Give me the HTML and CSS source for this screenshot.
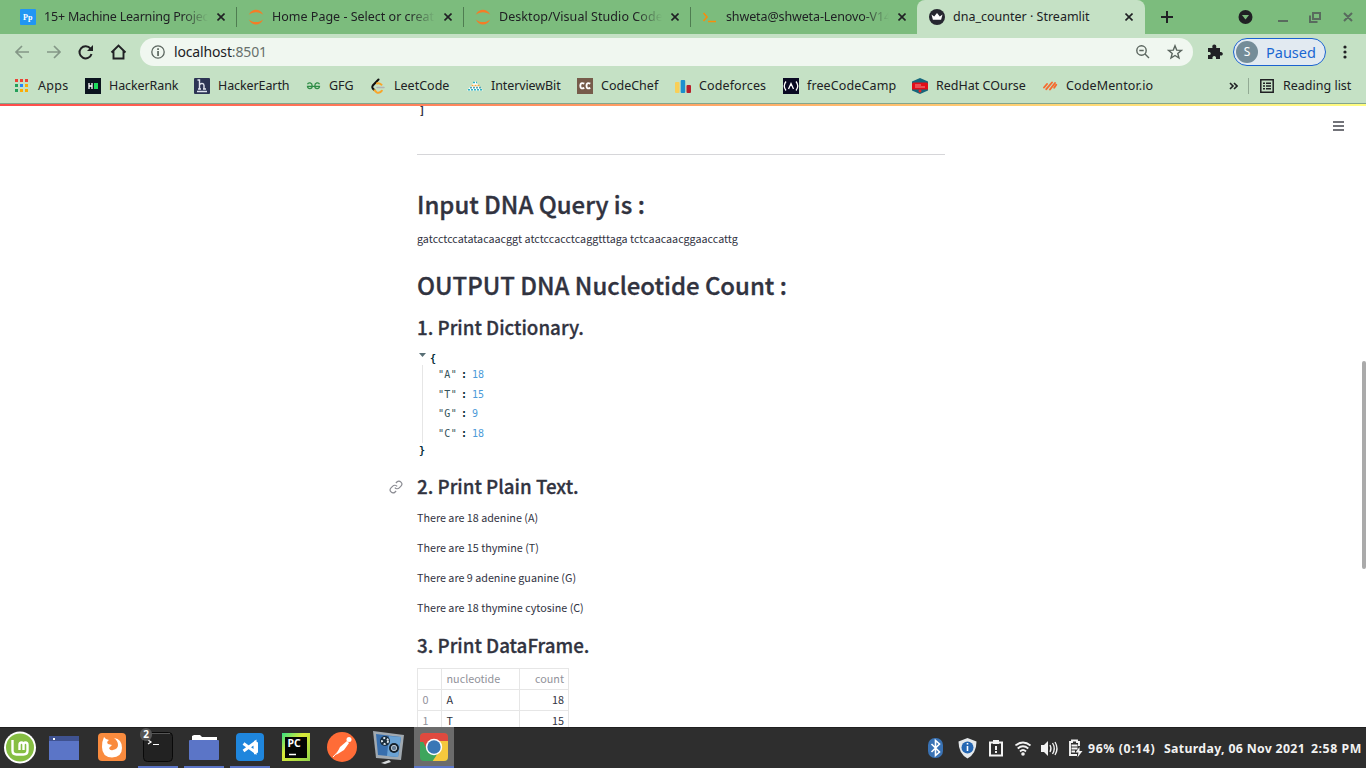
FILE: index.html
```html
<!DOCTYPE html>
<html lang="en">
<head>
<meta charset="utf-8">
<title>dna_counter · Streamlit</title>
<link rel="stylesheet" href="styles.css">
</head>
<body>
<div class="screen">
  <header class="browser">
    <div class="tabs">
      <div class="tab">
        <svg class="fav" viewBox="0 0 16 16"><rect width="16" height="16" rx="1" fill="#2196f3"/><text x="3" y="11" class="pp">Pp</text></svg>
        <span class="title t1">15+ Machine Learning Projec</span>
        <svg class="close" viewBox="0 0 8 8"><path d="M.5.5l7 7M7.5.5l-7 7"/></svg>
      </div>
      <div class="tab">
        <svg class="fav" viewBox="0 0 16 16"><path d="M.8 5.7C4-.9 12-.9 15.2 5.7 11.500 2.300 4.500 2.300.8 5.700ZM.8 10.500C4 17.100 12 17.100 15.200 10.500 11.500 13.900 4.500 13.900.8 10.500Z" fill="#f57c26"/></svg>
        <span class="title t2">Home Page - Select or creat</span>
        <svg class="close" viewBox="0 0 8 8"><path d="M.5.5l7 7M7.5.5l-7 7"/></svg>
      </div>
      <div class="tab">
        <svg class="fav" viewBox="0 0 16 16"><path d="M.8 5.7C4-.9 12-.9 15.2 5.7 11.500 2.300 4.500 2.300.8 5.700ZM.8 10.500C4 17.100 12 17.100 15.200 10.500 11.500 13.900 4.500 13.900.8 10.500Z" fill="#f57c26"/></svg>
        <span class="title t3">Desktop/Visual Studio Code</span>
        <svg class="close" viewBox="0 0 8 8"><path d="M.5.5l7 7M7.5.5l-7 7"/></svg>
      </div>
      <div class="tab last">
        <svg class="fav" viewBox="0 0 16 16"><path d="M1.500 4l3.500 4-3.500 4M6 12.500h8" fill="none" stroke="#f88d0b" stroke-width="1.600"/></svg>
        <span class="title t4">shweta@shweta-Lenovo-V14</span>
        <svg class="close" viewBox="0 0 8 8"><path d="M.5.5l7 7M7.5.5l-7 7"/></svg>
      </div>
      <div class="tab active">
        <svg class="fav" viewBox="0 0 16 16"><circle cx="8" cy="8" r="8" fill="#262730"/><path d="M2.500 5.500l2.700 2L8 4l2.800 3.500 2.700-2-1.400 5.200H3.900Z" fill="#fff"/></svg>
        <span class="title t5">dna_counter · Streamlit</span>
        <svg class="close" viewBox="0 0 8 8"><path d="M.5.5l7 7M7.5.5l-7 7"/></svg>
      </div>
      <svg class="newtab" viewBox="0 0 12 12"><path d="M6 0v12M0 6h12"/></svg>
      <svg class="winbuttons" viewBox="0 0 116 16"><circle cx="7.500" cy="8" r="7" fill="#202124"/><path d="M4 6h7L7.500 10.500Z" fill="#7cbc7d"/><g fill="none" stroke="#596b5e" stroke-width="2"><path d="M40 12h10M75 4h7v6h-7ZM72 6.500v6.500h7.500M106 4l8 8M114 4l-8 8"/></g></svg>
    </div>

    <div class="toolbar">
      <svg class="nav" viewBox="0 0 128 20"><g fill="none" stroke-width="1.700"><path d="M15 10H2M8 4l-6 6 6 6M33 10h13M40 4l6 6-6 6" stroke="#849787"/><path d="M76.500 6.600a6.100 6.100 0 1 0 1 5.300" stroke="#202124" stroke-width="2"/><path d="M97.500 10.500l7-7 7 7M99.500 8.500V16.500h10V8.500" stroke="#202124" stroke-width="1.900"/></g><path d="M79 3v6h-6Z" fill="#202124"/></svg>
      <div class="address">
        <svg class="info" viewBox="0 0 14 14"><circle cx="7" cy="7" r="6.200" fill="none" stroke="#5a655e" stroke-width="1.300"/><path d="M6.200 3.200h1.700v1.700H6.200zM6.200 6h1.700v5H6.200z" fill="#5a655e"/></svg>
        <span class="url">localhost<span class="port">:8501</span></span>
        <svg class="magnify" viewBox="0 0 14 14"><g fill="none" stroke="#5a655e" stroke-width="1.400"><circle cx="5.500" cy="5.500" r="4.700"/><path d="M9 9l4 4M3.300 5.500h4.400"/></g></svg>
        <svg class="star" viewBox="0 0 16 16"><path d="M8 1.800l1.700 4.300 4.700.3-3.600 3 1.200 4.600L8 11.500 4 14l1.200-4.600-3.600-3 4.700-.3Z" fill="none" stroke="#5a655e" stroke-width="1.400"/></svg>
      </div>
      <svg class="puzzle" viewBox="0 0 16 16"><path d="M1 4h4.500C4.800 1.500 6 .5 7.300.5S9.800 1.500 9.200 4H13v4c2.200-.5 2.800.8 2.800 1.800s-.6 2.200-2.800 1.700V15H9c.3-2.200-.6-3-1.800-3s-2 .8-1.700 3H1v-4c2 .3 2.700-.6 2.700-1.600S3 7.600 1 8Z" fill="#202124"/></svg>
      <div class="profile"><span class="avatar">S</span><span class="paused">Paused</span></div>
      <svg class="dots" viewBox="0 0 4 16"><g fill="#202124"><circle cx="2" cy="3" r="1.600"/><circle cx="2" cy="8" r="1.600"/><circle cx="2" cy="13" r="1.600"/></g></svg>
    </div>

    <div class="bookmarks">
      <div class="bm"><svg viewBox="0 0 16 16"><g fill="#ea4335"><path d="M0 1h3v3H0zM5 1h3v3H5zM10 1h3v3h-3z"/></g><g fill="#24a05a"><path d="M0 6h3v3H0zM0 11h3v3H0z"/></g><path d="M5 6h3v3H5z" fill="#2684fc"/><path d="M10 6h3v3h-3zM5 11h3v3H5zM10 11h3v3h-3z" fill="#fbac05"/></svg><span class="b0">Apps</span></div>
      <div class="bm"><svg viewBox="0 0 16 16"><path d="M0 0h16v16H0z" fill="#0b141f"/><path d="M4 5v6M7 5v6M4 8h3" stroke="#fff" stroke-width="1.300"/><path d="M9 5h4v6H9z" fill="#1fdc5e"/></svg><span class="b1">HackerRank</span></div>
      <div class="bm"><svg viewBox="0 0 16 16"><rect width="16" height="16" rx="1" fill="#2c3454"/><path d="M3.500 2h2v9M5.500 7c1-2 4.500-2 4.500.5V11M4 11h3M9 11h3M3 13.500h10" fill="none" stroke="#dfe3ee" stroke-width="1.400"/></svg><span class="b2">HackerEarth</span></div>
      <div class="bm tight"><svg viewBox="0 0 16 16"><path d="M1.500 6.200C2.500 4 6.200 4.500 6.200 8S1.500 11.300 1.500 8.300h12c0 3-4.700 3.200-4.700-.3S12.500 4 13.500 6.200" fill="none" stroke="#2f8d46" stroke-width="1.300"/></svg><span class="b3">GFG</span></div>
      <div class="bm tight"><svg viewBox="0 0 16 16"><g fill="none" stroke-width="2" stroke-linecap="round"><path d="M7.500 1.500L1.800 7.500q-1 1.500 0 3l1.500 1.500" stroke="#111"/><path d="M3.500 12.200l2 2q1.800 1.300 3.800 0l1.500-1.500M6 5.500q2-1 4.500 1.200" stroke="#f8a52a"/><path d="M6 9.500h7" stroke="#b3b3b3" stroke-width="1.500"/></g></svg><span class="b4">LeetCode</span></div>
      <div class="bm"><svg viewBox="0 0 16 16"><path d="M8 3l8 9.500H0Z" fill="#fff"/><g stroke-width="1.600" stroke-dasharray="2 1" fill="none"><path d="M6 4.500h4M1 11.800h14" stroke="#2bb3c6"/><path d="M4.500 7.500h8" stroke="#f0a53a"/><path d="M3 9.600h11" stroke="#54a6b3"/></g></svg><span class="b5">InterviewBit</span></div>
      <div class="bm"><svg viewBox="0 0 16 16"><path d="M0 0h16v16H0z" fill="#765b4a"/><path d="M7.300 5.700Q3.300 4 3.300 7.800t4 2.100M13.300 5.700Q9.500 4 9.500 7.800t3.800 2.100" fill="none" stroke="#fff" stroke-width="1.900"/></svg><span class="b6">CodeChef</span></div>
      <div class="bm"><svg viewBox="0 0 16 16"><rect y="4" width="4.500" height="11" rx="1" fill="#f9cf57"/><rect x="5.700" y="2" width="4.500" height="13" rx="1" fill="#1b8fce"/><rect x="11.500" y="7" width="4.500" height="8" rx="1" fill="#b71f2b"/></svg><span class="b7">Codeforces</span></div>
      <div class="bm"><svg viewBox="0 0 16 16"><path d="M0 0h16v16H0z" fill="#0a0a23"/><path d="M3 3.500q-3.500 4.500 0 9M13 3.500q3.500 4.500 0 9M5.500 11L8 5.500l2.500 5.500" fill="none" stroke="#fff" stroke-width="1.300"/></svg><span class="b8">freeCodeCamp</span></div>
      <div class="bm"><svg viewBox="0 0 16 16"><path d="M8 0l8 3.500v9L8 16 0 12.500v-9Z" fill="#15667c"/><path d="M0 5.500l1-1h14l1 1v6H0Z" fill="#e20d18"/><path d="M3 7h6M3 9h10" stroke="#f48e8e"/><circle cx="8" cy="13" r="1.500" fill="#e22"/></svg><span class="b9">RedHat COurse</span></div>
      <div class="bm tight"><svg viewBox="0 0 16 16"><path d="M1 9.500L4 6M3.300 11.200L9 4.500M7 11.500l5-6.500M11.200 9.800l2-3" fill="none" stroke="#f56a2e" stroke-width="1.900" stroke-linecap="round"/></svg><span class="b10">CodeMentor.io</span></div>
      <svg class="more" viewBox="0 0 9 8"><path d="M1 1l3 3-3 3M5 1l3 3-3 3" fill="none" stroke="#202124" stroke-width="1.600"/></svg>
      <div class="reading"><svg viewBox="0 0 14 14"><path d="M.8.8h12.400v12.400H.8Z" fill="none" stroke="#202124" stroke-width="1.500"/><path d="M3 4.200h2M6 4.200h5M3 7h2M6 7h5M3 9.800h2M6 9.800h5" stroke="#202124" stroke-width="1.500"/></svg><span class="b11">Reading list</span></div>
    </div>
    <div class="decoration"></div>
  </header>

  <main class="page">
    <svg class="menu" viewBox="0 0 12 10"><path d="M0 1h11M0 5h11M0 9h11" stroke="#44454d" stroke-width="1.300"/></svg>
    <div class="scrollthumb"></div>
    <div class="content">
      <div class="bracket">]</div>
      <hr>
      <h1 class="h-input">Input DNA Query is :</h1>
      <p class="query">gatcctccatatacaacggt atctccacctcaggtttaga tctcaacaacggaaccattg</p>
      <h1 class="h-output">OUTPUT DNA Nucleotide Count :</h1>
      <h2 class="h-dict">1. Print Dictionary.</h2>
      <div class="json">
        <div class="open"><svg viewBox="0 0 7 4"><path d="M0 0h7L3.500 4Z" fill="#586e75"/></svg>{</div>
        <div class="entries">
          <div><span>"A"</span><b>:</b><i>18</i></div>
          <div><span>"T"</span><b>:</b><i>15</i></div>
          <div><span>"G"</span><b>:</b><i>9</i></div>
          <div><span>"C"</span><b>:</b><i>18</i></div>
        </div>
        <div class="shut">}</div>
      </div>
      <h2 class="h-plain"><svg class="anchor" viewBox="0 0 24 24"><path d="M10 13a5 5 0 0 0 7.540.54l3-3a5 5 0 0 0-7.070-7.070l-1.720 1.710M14 11a5 5 0 0 0-7.540-.54l-3 3a5 5 0 0 0 7.070 7.070l1.710-1.710"/></svg>2. Print Plain Text.</h2>
      <div class="lines">
        <p>There are 18 adenine (A)</p>
        <p>There are 15 thymine (T)</p>
        <p>There are 9 adenine guanine (G)</p>
        <p>There are 18 thymine cytosine (C)</p>
      </div>
      <h2 class="h-frame">3. Print DataFrame.</h2>
      <div class="frame">
        <span></span><span class="muted">nucleotide</span><span class="muted num">count</span>
        <span class="muted">0</span><span>A</span><span class="num">18</span>
        <span class="muted">1</span><span>T</span><span class="num">15</span>
      </div>
    </div>
  </main>

  <footer class="taskbar">
    <div class="app"><svg viewBox="0 0 40 41"><circle cx="20" cy="20.500" r="16" fill="#fff"/><circle cx="20" cy="20.500" r="14" fill="#86be43"/><path d="M12.500 13v10.500q0 4 4 4h7q4 0 4-4V18q0-2.500-2-2.500t-2 2.500v5M23.500 18q0-2.500-2-2.500t-2 2.500v5" fill="none" stroke="#fff" stroke-width="2.400"/></svg></div>
    <div class="app window"><svg viewBox="0 0 40 41"><path d="M5 9h30v24H5z" fill="#5b75c7"/><path d="M5 9h30v5H5z" fill="#3f5290"/><path d="M9 11h2v2H9z" fill="#fff"/></svg></div>
    <div class="app firefox"><svg viewBox="0 0 40 41"><rect x="6" y="6" width="28" height="28" rx="4" fill="#f98b3e"/><path d="M12 10q2 3 5 3-3 2-1 4l4 1-3 3q1 3 4 2 5-1 5-5 0-4-4-7 8 1 8 10 0 9-10 9.500Q10 30 10 20q0-6 2-10Z" fill="#fff"/></svg></div>
    <div class="app open"><svg viewBox="0 0 40 41"><rect x="5.500" y="5.500" width="29" height="29" rx="4" fill="#222" stroke="#090909"/><path d="M8 6.500h24" stroke="#555"/><path d="M10 13l3 2-3 2M15 17.500h6" fill="none" stroke="#fff" stroke-width="1.200"/></svg><span class="badge">2</span></div>
    <div class="app open"><svg viewBox="0 0 40 41"><path d="M8 13V9l2-1h6l2 2h15v6H8Z" fill="#fff"/><rect x="5" y="13" width="30" height="20" rx="1" fill="#5b75c7"/></svg></div>
    <div class="app open"><svg viewBox="0 0 40 41"><rect x="6" y="6" width="28" height="28" rx="4" fill="#1f86dd"/><path d="M13.500 16.500l11.500 8.500V15.500L13.500 24" fill="none" stroke="#fff" stroke-width="3"/><path d="M24 13.500l4 2v10l-4 2Z" fill="#fff"/></svg></div>
    <div class="app"><svg viewBox="0 0 40 41"><defs><linearGradient id="pc" x2="1" y2="1"><stop stop-color="#35df83"/><stop offset=".4" stop-color="#dcea38"/><stop offset="1" stop-color="#90d34a"/></linearGradient></defs><path d="M6 6h28v28H6z" fill="url(#pc)"/><path d="M9 10h22v21H9z" fill="#050505"/><text x="11.500" y="20" class="pc">PC</text><path d="M13 27.500h7" stroke="#fff" stroke-width="1.500"/></svg></div>
    <div class="app"><svg viewBox="0 0 40 41"><circle cx="20" cy="20" r="15" fill="#ff6c37"/><path d="M14 28l4-8 7-6 2 2-5 7Z" fill="#fff"/><path d="M11 30l14-15" stroke="#fff"/><circle cx="27" cy="12.500" r="2.500" fill="#fff"/></svg></div>
    <div class="app"><svg viewBox="0 0 40 41"><path d="M5 4l31 4-3 25-25-2Z" fill="#a1a9b0"/><path d="M8 7l25 3-3 20-20-2Z" fill="#376ead"/><path d="M21 9l12 1-3 20-11-1Z" fill="#6aa2d4"/><circle cx="17" cy="14" r="5" fill="#192c3c"/><circle cx="17" cy="14" r="3" fill="none" stroke="#dce6ed" stroke-dasharray="2 2" stroke-width="2"/><circle cx="26" cy="21" r="5" fill="#15202b"/><circle cx="26" cy="21" r="2.700" fill="#657d96" stroke="#bcc8d2"/><path d="M13 36l8-3 2 2-6 2Z" fill="#d7dadc"/></svg></div>
    <div class="app open current"><svg viewBox="0 0 40 41"><defs><clipPath id="sq"><rect x="6" y="6" width="28" height="28" rx="4"/></clipPath></defs><g clip-path="url(#sq)"><path d="M6 6h28v28H6z" fill="#3ea55d"/><path d="M6 5h29v10H20L6 15Z" fill="#df4a3f"/><path d="M20 14h15v21H18l8-12Z" fill="#f5c83d"/><path d="M6 8l7 15 7-9Z" fill="#df4a3f"/></g><circle cx="20" cy="20" r="8.200" fill="#fff"/><circle cx="20" cy="20" r="6.700" fill="#3977b6"/></svg></div>

    <div class="tray">
      <svg viewBox="0 0 160 24"><rect x="0" y="1" width="15" height="20" rx="7" fill="#3972b4"/><path d="M3.500 7l8 8-4 3.500v-15l4 3.500-8 8" fill="none" stroke="#fff" stroke-width="1.600"/><path d="M39.500 1l9 3.500q0 12-9 17-9-5-9-17Z" fill="#e4e8eb"/><circle cx="39.500" cy="10.500" r="6" fill="#2567b3"/><path d="M39.500 6v1.500M39.500 9v5" stroke="#fff" stroke-width="1.600"/><path d="M62 5.500h12v13H62Z" fill="none" stroke="#f2f2f2" stroke-width="2"/><path d="M65 3h6v4h-6ZM67 9h2v4h-2ZM67 14h2v2h-2Z" fill="#f2f2f2"/><g fill="none" stroke="#f2f2f2" stroke-width="1.800"><path d="M87.500 8.500q7.500-6 15 0M89.700 11.500q5.300-4.500 10.600 0M92 14.500q3-3 6 0"/></g><circle cx="95" cy="17" r="1.800" fill="#f2f2f2"/><path d="M113 8h3l4-4v15l-4-4h-3Z" fill="#f2f2f2"/><path d="M122 8q2 3.500 0 7M124.500 6q3.500 5.500 0 11M127 5q4 6.500 0 13" fill="none" stroke="#f2f2f2" stroke-width="1.300"/><path d="M149 18h-7v-13h2V3.500h5V5h2v4M143.500 8.500h6M143.500 11.500h6M143.500 14.500h3.500" fill="none" stroke="#f2f2f2" stroke-width="1.900"/><path d="M151.500 10l-4 5.500h3l-1 5 5-6.500h-3Z" fill="#f2f2f2"/></svg>
      <span class="power">96% (0:14)</span><span class="date">Saturday, 06 Nov 2021</span><span class="time">2:58 PM</span>
    </div>
  </footer>
</div>
</body>
</html>
```
FILE: styles.css
```css
* { box-sizing: border-box; }
body { margin: 0; overflow: hidden; background: #fff; }
svg { display: block; flex: none; }
.screen { width: 1366px; height: 768px; display: flex; flex-direction: column; overflow: hidden; }

/* Browser chrome */
.browser { height: 106px; flex: none; background: #c5e1c5; font: 12.5px/18px "Noto Sans", sans-serif; color: #202124; }
.tabs { height: 34px; display: flex; background: #7cbc7d; }
.tab { width: 227px; height: 34px; flex: none; display: flex; align-items: center; padding-left: 11px; background: linear-gradient(#4f7d51, #4f7d51) right 7px / 1px 20px no-repeat; }
.tab:first-child { width: 237px; padding-left: 20px; }
.tab.last { width: 226px; background: none; }
.tab.active { width: 228px; padding-left: 12px; background: #c5e1c5; border-radius: 8px 8px 0 0; }
.fav { width: 16px; height: 16px; }
.title { width: 163px; margin-left: 8px; flex: none; white-space: nowrap; mask-image: linear-gradient(90deg, #000 84%, transparent); }
.tab:first-child .title { width: 164px; }
.t1 { letter-spacing: -.2px; }
.t3 { letter-spacing: .06px; }
.t4 { letter-spacing: -.12px; }
.active .title { mask-image: none; }
.close { width: 8px; height: 8px; margin-left: 9px; fill: none; stroke: #202124; stroke-width: 1.6; }
.pp { font: bold 8px "Liberation Serif", serif; fill: #fff; }
.newtab { width: 12px; height: 12px; margin: 11px 0 0 16px; fill: none; stroke: #202124; stroke-width: 2; }
.winbuttons { width: 116px; height: 16px; margin: 9px 0 0 65px; overflow: visible; }

.toolbar { height: 36px; display: flex; align-items: center; padding-left: 14px; }
.nav { width: 128px; height: 20px; margin-right: -2px; }
.address { width: 1053px; height: 28px; flex: none; display: flex; align-items: center; padding-left: 11px; border-radius: 14px; background: #f0f7f0; }
.info { width: 14px; height: 14px; }
.url { width: 962px; margin-left: 9px; flex: none; font-size: 14px; letter-spacing: -0.15px; }
.port { color: #68706b; }
.magnify { width: 14px; height: 14px; }
.star { width: 16px; height: 16px; margin-left: 17px; }
.puzzle { width: 16px; height: 16px; margin-left: 14px; }
.profile { width: 93px; height: 28px; margin-left: 10px; display: flex; align-items: center; border: 1px solid #1a62d0; border-radius: 14px; background: #e2eaf1; color: #1967d2; padding-left: 2px; }
.avatar { width: 22px; height: 22px; border-radius: 50%; background: #748c98; color: #fff; font-size: 12px; line-height: 22px; text-align: center; }
.paused { margin-left: 8px; font-size: 14.5px; }
.dots { width: 4px; height: 16px; margin-left: 17px; }

.bookmarks { height: 33px; padding: 0 0 2px 15px; display: grid; grid-template-columns: 70px 109px 112px 65px 96px 110px 98px 108px 129px 131px 186px 19px 118px; align-items: center; }
.bm, .reading { display: flex; align-items: center; white-space: nowrap; }
.bm svg { width: 16px; height: 16px; margin-right: 8px; }
.bm:first-child svg, .bm.tight svg { margin-right: 7px; }
.b0 { letter-spacing: .3px; }
.b1, .b2, .b5 { letter-spacing: -.1px; }
.b7, .b8, .b10 { letter-spacing: .12px; }
.more { width: 9px; height: 8px; }
.reading { height: 16px; border-left: 1px solid #92aa94; padding-left: 11px; }
.reading svg { width: 14px; height: 14px; margin-right: 9px; }
.decoration { height: 3px; border-top: 1px solid #84a58c; background: linear-gradient(90deg, #ff4b4b, #fffd80); }

/* Streamlit page */
.page { position: relative; height: 621px; flex: none; overflow: hidden; background: #fff; color: #31333f; font-family: "Noto Sans CJK SC", sans-serif; }
.menu { position: absolute; top: 15px; left: 1333px; width: 12px; height: 10px; }
.scrollthumb { position: absolute; top: 255px; right: 0; width: 4px; height: 208px; background: #aaa; border-radius: 2px; }
.content { width: 528px; margin-left: 417px; }
.bracket { height: 10px; padding-left: 2px; font: bold 10px/10px "DejaVu Sans Mono", monospace; }
hr { height: 1px; margin: 38px 0 0; border: 0; background: #d6d6d9; }
h1, h2, p { margin: 0; white-space: nowrap; }
h1 { height: 32px; font-size: 23.95px; line-height: 32px; font-weight: 500; -webkit-text-stroke: .35px #31333f; }
h2 { height: 26px; font-size: 18.75px; line-height: 26px; font-weight: 500; -webkit-text-stroke: .3px #31333f; }
p { font-size: 10.75px; line-height: 18px; }
.h-input { margin-top: 33px; }
.query { margin-top: 10px; }
.h-output { margin-top: 21px; }
.h-dict { margin-top: 13px; }
.json { margin-top: 10px; font: 10px/17px "DejaVu Sans Mono", monospace; }
.json .open, .json .shut { height: 16px; font-weight: bold; display: flex; padding-left: 2px; color: #002b36; }
.json .shut { line-height: 16px; }
.json .open svg { width: 7px; height: 4px; margin: 3px 4px 0 0; }
.entries { margin: -1px 0 0 5px; padding-left: 15px; border-left: 1px solid #e6e6e6; color: #002b36; }
.entries div { height: 19.5px; line-height: 19.5px; display: flex; }
.entries span { width: 23px; color: #36545a; letter-spacing: .35px; }
.entries b { width: 11px; font-weight: bold; }
.entries i { font-style: normal; color: #4d9bd8; }
.h-plain { margin-top: 14px; position: relative; }
.anchor { position: absolute; left: -28px; top: 7px; width: 14px; height: 14px; fill: none; stroke: #898a91; stroke-width: 2; }
.lines { margin-top: 4px; }
.lines p { line-height: 30px; }
.h-frame { margin-top: 9px; }
.frame { margin-top: 10px; width: 152px; display: grid; grid-template-columns: 24px 78px 49px; grid-auto-rows: 21px; border: solid #e6e6e6; border-width: 1px 0 0 1px; font-size: 10.8px; line-height: 19px; }
.frame span { padding: 0 4px 0 4.5px; border: solid #e6e6e6; border-width: 0 1px 1px 0; }
.frame .num { text-align: right; }
.frame .muted { color: #91929a; }

/* Desktop panel */
.taskbar { height: 41px; display: flex; background: #2e2e2e; border-top: 1px solid #202020; }
.app { position: relative; width: 40px; height: 41px; margin-right: 6px; margin-top: -1px; flex: none; }
.app svg { width: 40px; height: 41px; }
.app.window { margin-left: -2px; margin-right: 8px; }
.app.open { border-bottom: 2px solid #5b75c7; }
.app.current { background: #6b6b6b; }
.badge { position: absolute; top: 1px; left: 2px; width: 12px; height: 13px; border-radius: 6px; background: #555; color: #fff; font: bold 10px/13px "Noto Sans", sans-serif; text-align: center; }
.pc { font: bold 10.5px "Noto Sans", sans-serif; fill: #fff; }
.tray { flex: 1; display: flex; align-items: center; padding: 2px 0 0 468px; color: #f2f2f2; font: bold 12.3px/20px "Noto Sans", sans-serif; white-space: nowrap; }
.tray svg { width: 160px; height: 24px; }
.power { width: 76px; letter-spacing: .6px; }
.date { width: 147px; letter-spacing: .33px; }
.time { letter-spacing: .55px; }
```
